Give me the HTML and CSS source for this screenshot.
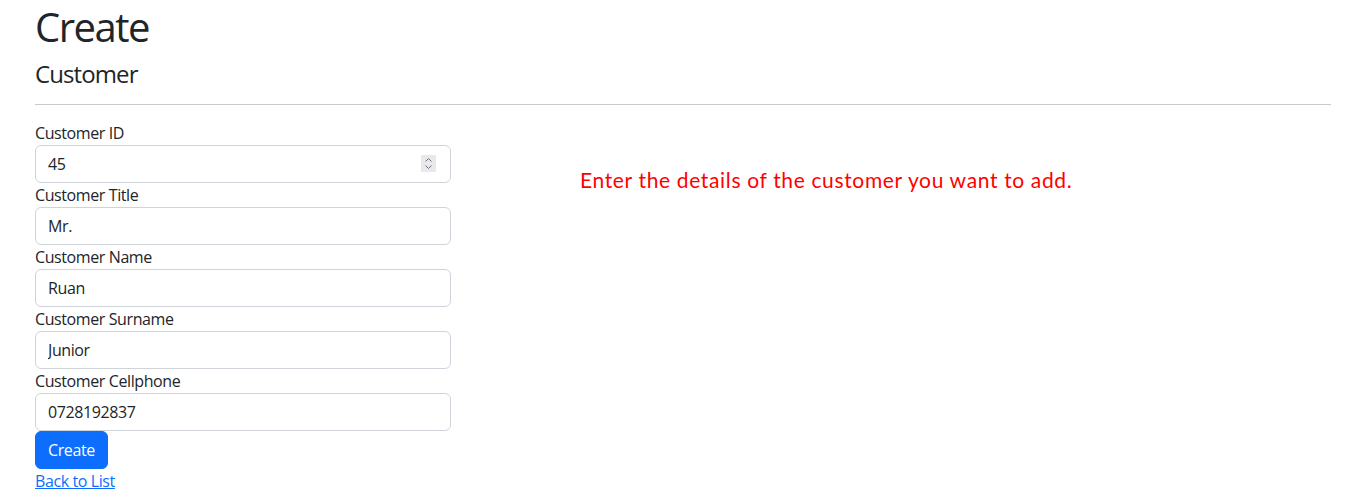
FILE: index.html
```html
<!DOCTYPE html>
<html lang="en">
<head>
<meta charset="utf-8">
<title>Create - Customer</title>
<link rel="stylesheet" href="styles.css">
</head>
<body>
<main class="page">
  <h1 class="title">Create</h1>
  <h4 class="subtitle">Customer</h4>
  <hr class="rule">
  <div class="row">
    <form class="form-col">
      <div class="group">
        <label class="label">Customer ID</label>
        <div class="field-wrap">
          <input class="control" type="text" value="45">
          <span class="spinner">
            <svg width="15" height="17" viewBox="0 0 15 17">
              <rect width="15" height="17" fill="#e9e9ed"/>
              <path d="M4.5 6.5 L7.5 3.5 L10.5 6.5" fill="none" stroke="#6f6f75" stroke-width="1"/>
              <path d="M4.5 10.5 L7.5 13.5 L10.5 10.5" fill="none" stroke="#6f6f75" stroke-width="1"/>
            </svg>
          </span>
        </div>
      </div>
      <div class="group">
        <label class="label">Customer Title</label>
        <input class="control" type="text" value="Mr.">
      </div>
      <div class="group">
        <label class="label">Customer Name</label>
        <input class="control" type="text" value="Ruan">
      </div>
      <div class="group">
        <label class="label">Customer Surname</label>
        <input class="control" type="text" value="Junior">
      </div>
      <div class="group">
        <label class="label">Customer Cellphone</label>
        <input class="control" type="text" value="0728192837">
      </div>
      <button class="btn" type="button">Create</button>
      <div class="back"><a href="#" class="link">Back to List</a></div>
    </form>
    <div class="note-col">
      <p class="note">Enter the details of the customer you want to add.</p>
    </div>
  </div>
</main>
</body>
</html>
```

FILE: styles.css
```css
html, body {
  margin: 0;
  padding: 0;
  background: #fff;
}
body {
  font-family: "Open Sans", "Noto Sans", sans-serif;
  font-size: 16px;
  line-height: 24px;
  letter-spacing: -0.4px;
  color: #212529;
}
.page {
  padding: 0 15px 0 35px;
}
.title {
  font-size: 40px;
  line-height: 48px;
  font-weight: 400;
  letter-spacing: -1.5px;
  margin: 3px 0 8px;
}
.subtitle {
  font-size: 24px;
  line-height: 29px;
  font-weight: 400;
  letter-spacing: -0.9px;
  margin: 0 0 8px;
}
.rule {
  border: 0;
  border-top: 1px solid #c8c9ca;
  margin: 16px 0;
}
.row {
  display: flex;
}
.form-col {
  width: 416px;
  flex: none;
}
.group {
  display: flex;
  flex-direction: column;
}
.label {
  display: block;
  font-size: 16px;
  line-height: 24px;
}
.field-wrap {
  position: relative;
}
.control {
  display: block;
  box-sizing: border-box;
  width: 100%;
  height: 38px;
  padding: 6px 12px;
  font-family: inherit;
  font-size: 16px;
  line-height: 24px;
  letter-spacing: -0.4px;
  color: #212529;
  background: #fff;
  border: 1px solid #ced4da;
  border-radius: 6px;
  outline: none;
}
.spinner {
  position: absolute;
  right: 15px;
  top: 10px;
  width: 15px;
  height: 17px;
  display: flex;
}
.btn {
  display: inline-block;
  height: 38px;
  padding: 6px 12px;
  font-family: inherit;
  font-size: 16px;
  line-height: 24px;
  letter-spacing: -0.4px;
  color: #fff;
  background: #0d6efd;
  border: 1px solid #0d6efd;
  border-radius: 6px;
}
.back {
  line-height: 24px;
}
.link {
  color: #0d6efd;
  text-decoration: underline;
}
.note-col {
  margin-left: 129px;
}
.note {
  margin: 44px 0 0;
  font-family: Lato, sans-serif;
  font-size: 21px;
  line-height: 30px;
  letter-spacing: 0.65px;
  color: #ff0000;
}
```
